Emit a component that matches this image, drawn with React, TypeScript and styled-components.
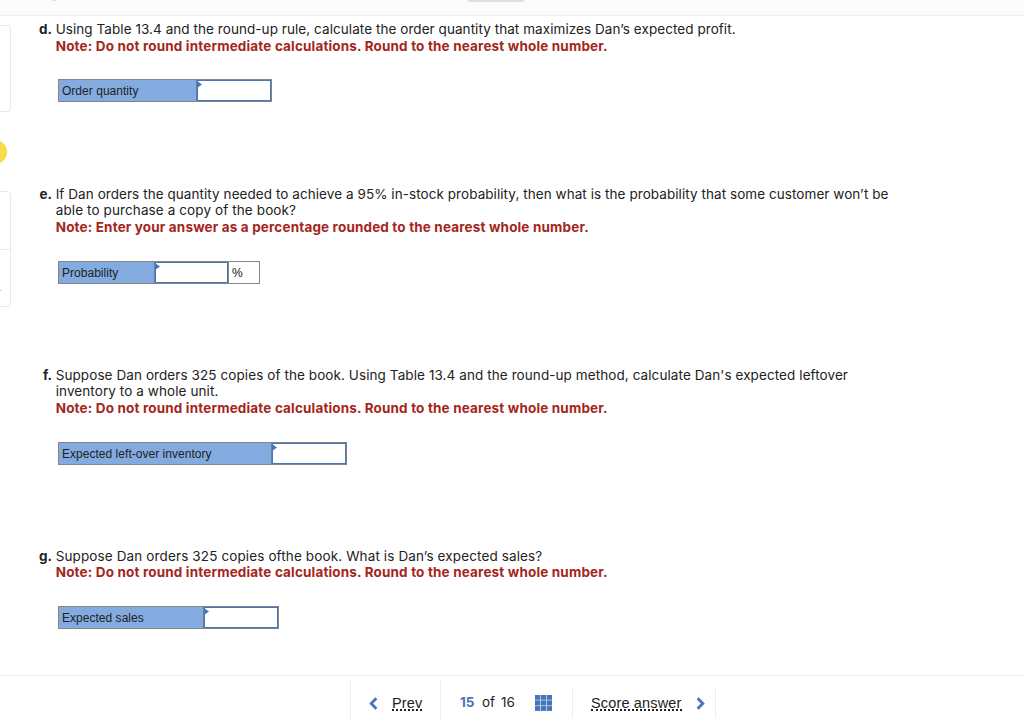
import React from "react";
import styled, { createGlobalStyle } from "styled-components";

const Global = createGlobalStyle`
  * { box-sizing: border-box; }
  html, body { margin: 0; background: #fff; overflow: hidden; }
`;

const Page = styled.div`
  width: 1024px;
  height: 725px;
  display: flex;
  flex-direction: column;
  overflow: hidden;
  background: #fff;
  color: #222;
  font-family: Inter, "Liberation Sans", sans-serif;
  font-size: 13.5px;
`;

const TopBar = styled.header`
  flex: none;
  height: 16px;
  display: flex;
  align-items: flex-start;
  background: #fcfcfc;
  border-bottom: 1px solid #eee;
`;

const TopMark = styled.span`
  width: 4px;
  height: 1px;
  margin-left: 52px;
  background: #d9def3;
`;

const TopHandle = styled.span`
  width: 56px;
  height: 2px;
  margin-left: 412px;
  border-radius: 0 0 4px 4px;
  background: #e0e0e0;
`;

const Body = styled.div`
  flex: none;
  height: 659px;
  display: flex;
`;

const Rail = styled.aside`
  flex: none;
  width: 39px;
  padding-top: 9px;
  display: flex;
  flex-direction: column;
`;

const RailCard = styled.div<{ $h: number; $top?: number }>`
  flex: none;
  width: 11px;
  height: ${(p) => p.$h}px;
  margin-top: ${(p) => p.$top ?? 0}px;
  border: 1px solid #e8e8e8;
  border-left: 0;
  border-radius: 0 4px 4px 0;
`;

const RailCell = styled.div`
  height: 58px;
  border-bottom: 1px solid #e8e8e8;
`;

const RailDash = styled.div`
  width: 1px;
  height: 1px;
  margin-top: 40px;
  background: #bbb;
`;

const RailBadge = styled.div`
  flex: none;
  width: 24px;
  height: 24px;
  margin: 28px 0 0 -17.5px;
  border-radius: 50%;
  background: #fbdb4a;
`;

const Questions = styled.main`
  flex: 1;
  padding-top: 5px;
`;

const Question = styled.section`
  display: grid;
  grid-template-columns: 13px 1fr;
  column-gap: 3.7px;
  margin-bottom: 83.25px;
`;

const Letter = styled.b`
  justify-self: end;
  line-height: 16.5px;
  font-weight: 700;
  white-space: nowrap;
`;

const Line = styled.div<{ $ls: number }>`
  height: 16.5px;
  line-height: 16.5px;
  white-space: nowrap;
  letter-spacing: ${(p) => p.$ls}px;
`;

const Note = styled(Line)`
  color: #a32620;
  font-weight: 700;
`;

const Answer = styled.div`
  display: flex;
  width: fit-content;
  height: 23px;
  margin: 25.4px 0 0 2.3px;
  border: 1px solid #858585;
  font: 12px "Liberation Sans", Arial, sans-serif;
  letter-spacing: 0.03px;
`;

const AnswerLabel = styled.label<{ $w: number }>`
  width: ${(p) => p.$w}px;
  padding-left: 3px;
  line-height: 22px;
  background: #83abe0;
  border-right: 1px solid #6b7f9d;
`;

const Field = styled.div<{ $w: number }>`
  position: relative;
  width: ${(p) => p.$w}px;
  border: 1px solid #4675b8;
  background: #fff;
`;

const Marker = styled.svg`
  position: absolute;
  left: -1px;
  top: 0;
`;

const Unit = styled.span`
  width: 31px;
  padding-left: 3px;
  line-height: 22px;
  color: #111;
  border-left: 1px solid #858585;
`;

const Footer = styled.footer`
  flex: none;
  height: 50px;
  display: flex;
  padding: 5px 0 4px 350px;
  border-top: 1px solid #eee;
  font-size: 13.5px;
`;

const FootCell = styled.div<{ $w: number; $short?: boolean }>`
  width: ${(p) => p.$w}px;
  display: flex;
  align-items: center;
  height: ${(p) => (p.$short ? 30 : 39)}px;
  padding-top: ${(p) => (p.$short ? 0 : 5)}px;
  margin-top: ${(p) => (p.$short ? 7 : 0)}px;
  border-left: 1px solid #eee;
`;

const NavLink = styled.a<{ $ml: number; $w: number }>`
  width: ${(p) => p.$w}px;
  margin-left: ${(p) => p.$ml}px;
  height: 15px;
  line-height: 14px;
  border-bottom: 2px dotted #222;
  font-family: "Liberation Sans", Arial, sans-serif;
  font-size: 14.5px;
  letter-spacing: 0.15px;
  white-space: nowrap;
`;

const Current = styled.b`
  margin-left: 19px;
  margin-top: -2px;
  width: 22px;
  color: #4675b8;
  font-weight: 700;
`;

const Plain = styled.span<{ $w: number }>`
  width: ${(p) => p.$w}px;
  margin-top: -2px;
`;

const Icon = styled.svg<{ $ml?: number }>`
  flex: none;
  margin-left: ${(p) => p.$ml ?? 0}px;
`;

type Item = {
  letter: string;
  lines: [string, number][];
  note: [string, number];
  label: string;
  width: number;
  unit?: string;
};

const items: Item[] = [
  {
    letter: "d.",
    lines: [["Using Table 13.4 and the round-up rule, calculate the order quantity that maximizes Dan’s expected profit.", 0.062]],
    note: ["Note: Do not round intermediate calculations. Round to the nearest whole number.", 0.16],
    label: "Order quantity",
    width: 138,
  },
  {
    letter: "e.",
    lines: [
      ["If Dan orders the quantity needed to achieve a 95% in-stock probability, then what is the probability that some customer won’t be", 0.062],
      ["able to purchase a copy of the book?", 0.11],
    ],
    note: ["Note: Enter your answer as a percentage rounded to the nearest whole number.", 0.155],
    label: "Probability",
    width: 96,
    unit: "%",
  },
  {
    letter: "f.",
    lines: [
      ["Suppose Dan orders 325 copies of the book. Using Table 13.4 and the round-up method, calculate Dan's expected leftover", 0.086],
      ["inventory to a whole unit.", 0.09],
    ],
    note: ["Note: Do not round intermediate calculations. Round to the nearest whole number.", 0.16],
    label: "Expected left-over inventory",
    width: 213,
  },
  {
    letter: "g.",
    lines: [["Suppose Dan orders 325 copies ofthe book. What is Dan’s expected sales?", 0.125]],
    note: ["Note: Do not round intermediate calculations. Round to the nearest whole number.", 0.16],
    label: "Expected sales",
    width: 145,
  },
];

const cells = [0, 6, 12];

export default function App() {
  return (
    <Page>
      <Global />
      <TopBar>
        <TopMark />
        <TopHandle />
      </TopBar>
      <Body>
        <Rail>
          <RailCard $h={87} />
          <RailBadge />
          <RailCard $h={116} $top={27}>
            <RailCell />
            <RailDash />
          </RailCard>
        </Rail>
        <Questions>
          {items.map((q) => (
            <Question key={q.letter}>
              <Letter>{q.letter}</Letter>
              <div>
                {q.lines.map(([text, ls]) => (
                  <Line key={text} $ls={ls}>{text}</Line>
                ))}
                <Note $ls={q.note[1]}>{q.note[0]}</Note>
                <Answer>
                  <AnswerLabel $w={q.width}>{q.label}</AnswerLabel>
                  <Field $w={q.unit ? 73 : 74}>
                    <Marker width="5" height="7" viewBox="0 0 5 7">
                      <path d="M0 0L5 3.5L0 7Z" fill="#4675b8" />
                    </Marker>
                  </Field>
                  {q.unit && <Unit>{q.unit}</Unit>}
                </Answer>
              </div>
            </Question>
          ))}
        </Questions>
      </Body>
      <Footer>
        <FootCell $w={90}>
          <Icon $ml={18} width="9" height="13" viewBox="0 0 9 13">
            <path d="M7.4 1.2L2.2 6.5L7.4 11.8" fill="none" stroke="#4675b8" strokeWidth="2.8" />
          </Icon>
          <NavLink $ml={14} $w={30}>Prev</NavLink>
        </FootCell>
        <FootCell $w={132}>
          <Current>15</Current>
          <Plain $w={19}>of</Plain>
          <Plain $w={34}>16</Plain>
          <Icon width="17" height="16" viewBox="0 0 17 16">
            <rect width="17" height="16" fill="#b5c9e5" />
            {cells.map((x) =>
              cells.map((y) => (
                <rect key={`${x}-${y}`} x={x} y={y * 0.93} width="5" height="4.7" fill="#4675b8" />
              ))
            )}
          </Icon>
        </FootCell>
        <FootCell $w={143} $short>
          <NavLink $ml={18} $w={91}>Score answer</NavLink>
          <Icon $ml={14} width="9" height="13" viewBox="0 0 9 13">
            <path d="M1.6 1.2L6.8 6.5L1.6 11.8" fill="none" stroke="#4675b8" strokeWidth="2.8" />
          </Icon>
        </FootCell>
        <FootCell $w={1} $short />
      </Footer>
    </Page>
  );
}
